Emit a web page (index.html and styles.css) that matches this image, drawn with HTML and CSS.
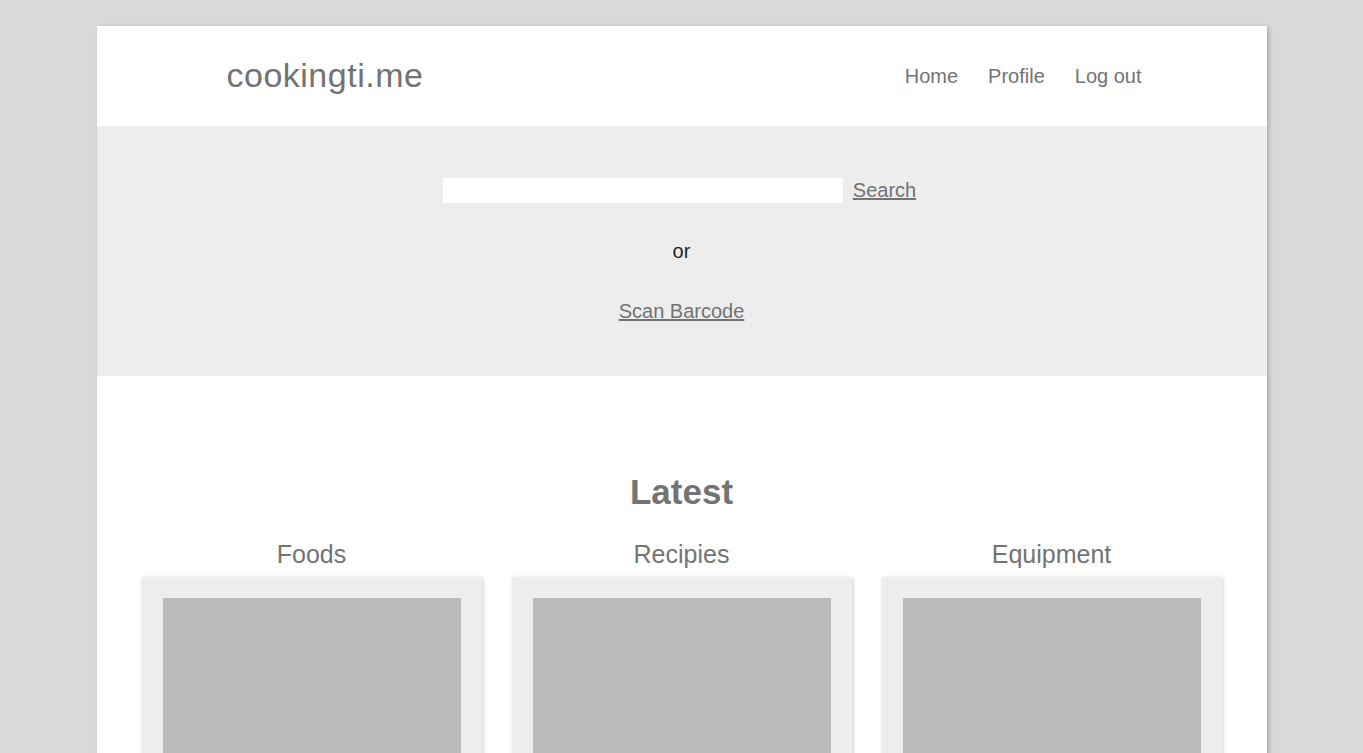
FILE: index.html
```html
<!DOCTYPE html>
<html lang="en">
<head>
<meta charset="utf-8">
<title>cookingti.me</title>
<link rel="stylesheet" href="styles.css">
</head>
<body>
<div class="page">
  <header class="header">
    <a class="logo" href="#">cookingti.me</a>
    <nav class="nav">
      <a href="#">Home</a>
      <a href="#">Profile</a>
      <a href="#">Log out</a>
    </nav>
  </header>
  <section class="search">
    <form class="search-row">
      <input class="search-input" type="text">
      <a class="link" href="#">Search</a>
    </form>
    <p class="or">or</p>
    <a class="link" href="#">Scan Barcode</a>
  </section>
  <main class="latest">
    <h1 class="latest-title">Latest</h1>
    <div class="columns">
      <div class="column">
        <h2 class="column-title">Foods</h2>
        <div class="card"><div class="thumb warm"></div></div>
      </div>
      <div class="column">
        <h2 class="column-title">Recipies</h2>
        <div class="card"><div class="thumb"></div></div>
      </div>
      <div class="column">
        <h2 class="column-title">Equipment</h2>
        <div class="card"><div class="thumb"></div></div>
      </div>
    </div>
  </main>
</div>
</body>
</html>
```

FILE: styles.css
```css
* { box-sizing: border-box; }
html, body { margin: 0; padding: 0; }
body {
  background: #d9d9d9;
  font-family: "Liberation Sans", Arial, Helvetica, sans-serif;
  color: #737373;
  overflow: hidden;
}
.page {
  width: 1170px;
  margin: 26px auto 0;
  background: #fff;
  box-shadow: 2px 1px 4px rgba(0,0,0,0.22);
  min-height: 800px;
}
.header {
  height: 100px;
  display: flex;
  align-items: center;
  justify-content: space-between;
  padding: 0 125px 0 130px;
}
.logo {
  font-size: 34px;
  color: #737373;
  text-decoration: none;
  letter-spacing: 0.5px;
  margin-top: -2px;
}
.nav {
  display: flex;
  gap: 30px;
}
.nav a {
  font-size: 20px;
  color: #737373;
  text-decoration: none;
}
.search {
  background: #ededed;
  height: 250px;
  display: flex;
  flex-direction: column;
  align-items: center;
  padding-top: 53px;
}
.search-row {
  display: flex;
  align-items: center;
  gap: 10px;
  margin: -1px 4px 1px 0;
}
.search-input {
  width: 400px;
  height: 25px;
  border: none;
  background: #fff;
  padding: 0;
  outline: none;
}
.link {
  font-size: 20px;
  color: #737373;
  text-decoration: underline;
}
.or {
  font-size: 20px;
  color: #222;
  margin: 35px 0 37px;
  line-height: 24px;
}
.latest {
  padding: 96px 45px 0;
}
.latest-title {
  margin: 0;
  text-align: center;
  font-size: 35px;
  font-weight: bold;
  line-height: 40px;
  color: #737373;
}
.columns {
  display: grid;
  grid-template-columns: repeat(3, 340px);
  gap: 30px;
  margin-top: 27px;
}
.column-title {
  margin: 0 0 8px;
  text-align: center;
  font-size: 25px;
  font-weight: normal;
  line-height: 30px;
  color: #737373;
}
.card {
  background: #ededed;
  padding: 21px 21px 0;
  height: 300px;
  box-shadow: 1px 1px 4px rgba(0,0,0,0.2);
}
.thumb {
  background: #bababa;
  height: 260px;
}
.thumb.warm { background: #bbb9ba; }
```
